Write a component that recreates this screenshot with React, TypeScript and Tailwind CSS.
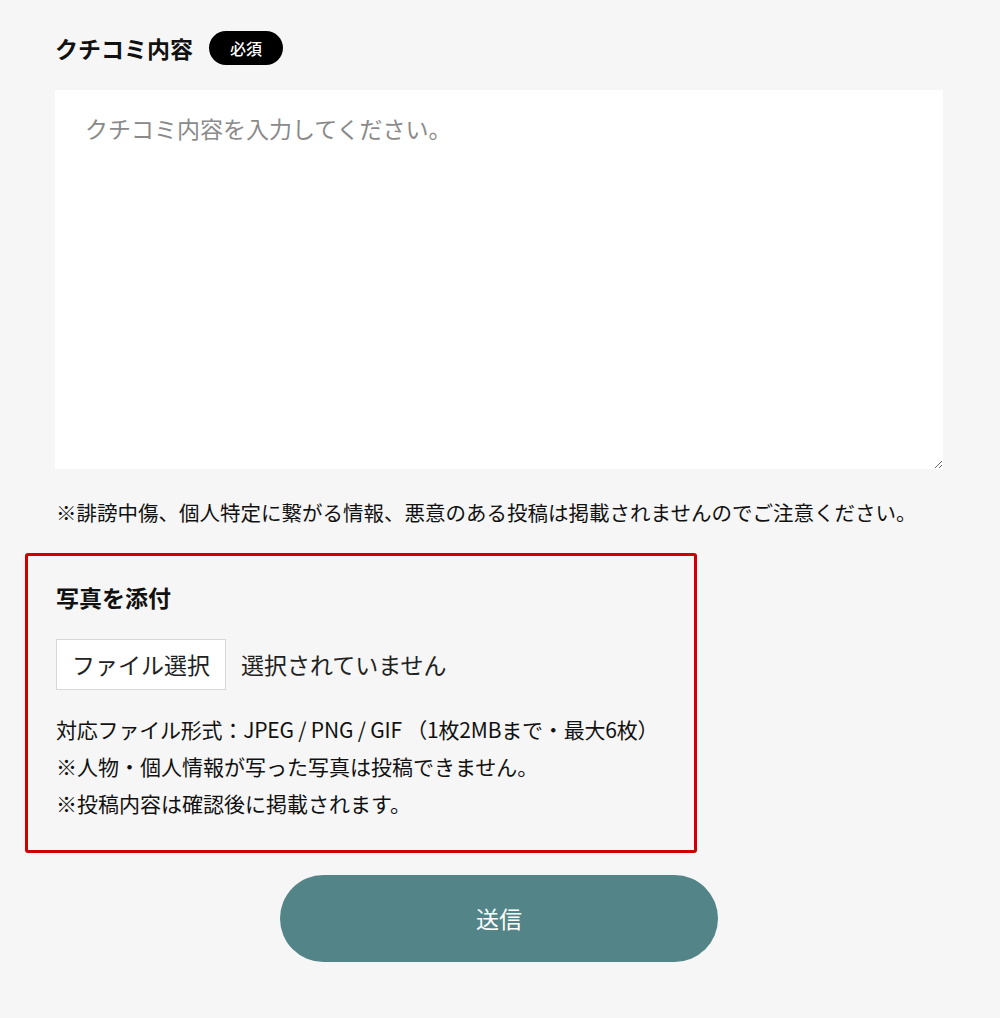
import { useState } from 'react';

const FONT = { fontFamily: '"Noto Sans CJK JP", "Noto Sans", sans-serif' };

export default function App() {
  const [body, setBody] = useState('');

  return (
    <div className="min-h-[1018px] w-[1000px] bg-[#f6f6f6] text-[#111]" style={FONT}>
      <div className="pl-[55px] pt-[31px] w-[943px]">
        <div className="flex items-center h-[34px]">
          <h2 className="text-[23px] font-bold leading-none">クチコミ内容</h2>
          <span className="ml-[16px] flex items-center justify-center h-[34px] w-[74px] rounded-full bg-black text-white text-[16px] font-medium">
            必須
          </span>
        </div>

        <textarea
          value={body}
          onChange={(e) => setBody(e.target.value)}
          placeholder="クチコミ内容を入力してください。"
          className="mt-[25px] block w-[888px] h-[379px] bg-white px-[30px] pt-[21px] text-[23px] leading-[1.5] placeholder:text-[#8a8a8a] outline-none"
          style={FONT}
        />

        <p className="mt-[28px] text-[20.5px] leading-[30px] pl-[1px]">
          ※誹謗中傷、個人特定に繋がる情報、悪意のある投稿は掲載されませんのでご注意ください。
        </p>

        <section className="mt-[26px] -ml-[30px] w-[672px] border-[3px] border-[#d00000] rounded-[3px] pl-[28px] pt-[25px] pb-[28px]">
          <h3 className="text-[23px] font-bold leading-[33px]">写真を添付</h3>

          <div className="mt-[25px] flex items-center">
            <button className="h-[51px] w-[170px] bg-white border border-[#d8d8d8] text-[23px] text-[#222]" style={FONT}>
              ファイル選択
            </button>
            <span className="ml-[15px] text-[23px] text-[#222]">選択されていません</span>
          </div>

          <div className="mt-[21px] text-[21px] leading-[37px]">
            <p className="tracking-[-0.2px]">対応ファイル形式：JPEG / PNG / GIF （1枚2MBまで・最大6枚）</p>
            <p>※人物・個人情報が写った写真は投稿できません。</p>
            <p>※投稿内容は確認後に掲載されます。</p>
          </div>
        </section>

        <div className="mt-[22px] flex justify-center w-[888px]">
          <button
            className="h-[87px] w-[438px] rounded-full bg-[#538487] text-white text-[23px]"
            style={FONT}
          >
            送信
          </button>
        </div>
      </div>
    </div>
  );
}
